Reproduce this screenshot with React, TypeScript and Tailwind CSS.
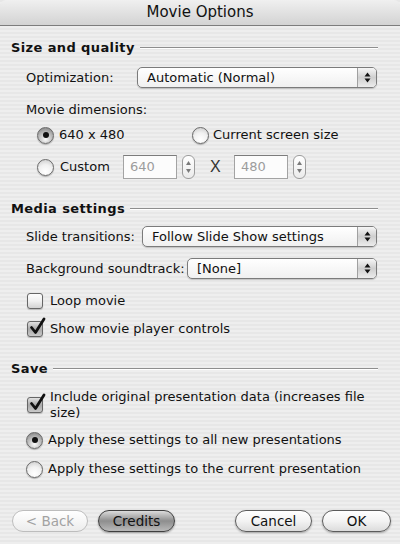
import React from 'react';
import clsx from 'clsx';

function PopUp({ text, className }: { text: string; className?: string }) {
    return (
        <div
            className={clsx(
                "flex h-[21px] items-stretch rounded-[5px] border border-[#7b7b7b] bg-gradient-to-b from-white to-[#f0f0f0] shadow-[0_1px_1px_rgba(0,0,0,0.18)]",
                className
            )}
        >
            <span className="flex-1 pl-[9px] leading-[19px]">{text}</span>
            <span className="flex w-[19px] items-center justify-center rounded-r-[4px] border-l border-[#a0a0a0] bg-gradient-to-b from-[#f6f6f6] via-[#cfcfcf] to-[#ececec]">
                <svg width="7" height="11" viewBox="0 0 7 11">
                    <path d="M0.5 4.5 L3.5 0.5 L6.5 4.5Z M0.5 6.5 L3.5 10.5 L6.5 6.5Z" fill="#111" />
                </svg>
            </span>
        </div>
    );
}

function Radio({ checked }: { checked?: boolean }) {
    return (
        <span
            className={clsx(
                "flex h-[17px] w-[17px] shrink-0 items-center justify-center rounded-full border border-[#6a6a6a] shadow-[0_1px_1px_rgba(0,0,0,0.25)]",
                checked
                    ? "bg-[radial-gradient(circle_at_50%_75%,#fafafa_0%,#b5b5b5_55%,#767676_100%)]"
                    : "bg-[radial-gradient(circle_at_50%_78%,#ffffff_0%,#f1f1f1_50%,#c6c6c6_100%)]"
            )}
        >
            {checked && <span className="h-[6px] w-[6px] rounded-full bg-[#111]" />}
        </span>
    );
}

function Checkbox({ checked, className }: { checked?: boolean; className?: string }) {
    return (
        <span
            className={clsx(
                "relative block h-[16px] w-[16px] shrink-0 rounded-[3px] border border-[#666] shadow-[0_1px_1px_rgba(0,0,0,0.2)]",
                checked
                    ? "bg-gradient-to-b from-[#e2e2e2] via-[#a9a9a9] to-[#c9c9c9]"
                    : "bg-gradient-to-b from-[#fdfdfd] via-[#f0f0f0] to-[#d2d2d2]",
                className
            )}
        >
            {checked && (
                <svg className="absolute -top-[5px] left-[1px]" width="17" height="19" viewBox="0 0 17 19">
                    <path
                        d="M2.5 10.5 L6.5 15.5 L15 2"
                        stroke="#111"
                        strokeWidth="2.8"
                        fill="none"
                        strokeLinecap="round"
                        strokeLinejoin="round"
                    />
                </svg>
            )}
        </span>
    );
}

function Stepper({ className }: { className?: string }) {
    return (
        <span
            className={clsx(
                "flex h-[24px] w-[13px] shrink-0 flex-col items-center justify-center gap-[4px] rounded-[6px] border border-[#9c9c9c] bg-gradient-to-b from-white to-[#ebebeb]",
                className
            )}
        >
            <svg width="5" height="4" viewBox="0 0 5 4">
                <path d="M0 4 L2.5 0 L5 4Z" fill="#7a7a7a" />
            </svg>
            <svg width="5" height="4" viewBox="0 0 5 4">
                <path d="M0 0 L2.5 4 L5 0Z" fill="#7a7a7a" />
            </svg>
        </span>
    );
}

function Field({ value, className }: { value: string; className?: string }) {
    return (
        <div
            className={clsx(
                "h-[24px] w-[54px] shrink-0 border border-[#a3a3a3] border-t-[#7c7c7c] bg-[#fcfcfc] pl-[6px] leading-[22px] text-[#9c9c9c]",
                className
            )}
        >
            {value}
        </div>
    );
}

function AquaButton({ label, kind = 'normal', className }: { label: string; kind?: 'normal' | 'dark' | 'disabled'; className?: string }) {
    return (
        <button
            className={clsx(
                "h-[22px] rounded-full border text-[13.5px] leading-[20px]",
                kind === 'normal' && "border-[#5c5c5c] bg-gradient-to-b from-white via-[#f3f3f3] to-[#dcdcdc] text-[#111] shadow-[0_1px_2px_rgba(0,0,0,0.3)]",
                kind === 'dark' && "border-[#3f3f3f] bg-gradient-to-b from-[#dcdcdc] via-[#8e8e8e] to-[#b9b9b9] text-[#111] shadow-[0_1px_2px_rgba(0,0,0,0.35)]",
                kind === 'disabled' && "border-[#bdbdbd] bg-gradient-to-b from-white via-[#f6f6f6] to-[#ececec] text-[#a2a2a2]",
                className
            )}
        >
            {label}
        </button>
    );
}

function SectionHeader({ title, className }: { title: string; className?: string }) {
    return (
        <div className={clsx("ml-[11px] mr-[22px] flex h-4 items-center", className)}>
            <span className="text-[13px] font-bold tracking-[0.03em]">{title}</span>
            <div className="ml-[5px] h-[2px] flex-1 border-b border-white bg-[#8e8e8e]" />
        </div>
    );
}

export default function App() {
    return (
        <div className="h-[544px] w-[400px] overflow-hidden bg-[repeating-linear-gradient(0deg,#eeeeee_0px,#eeeeee_2px,#e7e7e7_2px,#e7e7e7_4px)] font-['DejaVu_Sans',sans-serif] text-[13px] text-[#111]">
            {/* title bar */}
            <div className="flex h-[26px] items-center justify-center rounded-t-[6px] border-b border-[#7d7d7d] bg-gradient-to-b from-[#f0f0f0] to-[#d3d3d3] text-[15px]">
                Movie Options
            </div>

            {/* Size and quality */}
            <SectionHeader title="Size and quality" className="mt-[14px]" />
            <div className="ml-[26px] mr-[23px] mt-[11px] flex items-center">
                <span className="w-[111px] shrink-0">Optimization:</span>
                <PopUp className="flex-1" text="Automatic (Normal)" />
            </div>
            <div className="ml-[26px] mt-[14px] leading-4">Movie dimensions:</div>
            <div className="ml-[37px] mt-[8px] flex h-[18px] items-center">
                <div className="flex w-[155px] items-center">
                    <Radio checked />
                    <span className="ml-[5px]">640 x 480</span>
                </div>
                <Radio />
                <span className="ml-[4px]">Current screen size</span>
            </div>
            <div className="ml-[37px] mt-[11px] flex h-[24px] items-center">
                <div className="flex w-[86px] items-center">
                    <Radio />
                    <span className="ml-[6px]">Custom</span>
                </div>
                <Field value="640" />
                <Stepper className="ml-[5px]" />
                <span className="ml-[15px] w-[12px] font-['Liberation_Sans',sans-serif] text-[16px] text-[#333]">X</span>
                <Field value="480" className="ml-[12px]" />
                <Stepper className="ml-[5px]" />
            </div>

            {/* Media settings */}
            <SectionHeader title="Media settings" className="mt-[22px]" />
            <div className="ml-[26px] mr-[23px] mt-[9px] flex items-center">
                <span className="w-[116px] shrink-0">Slide transitions:</span>
                <PopUp className="flex-1" text="Follow Slide Show settings" />
            </div>
            <div className="ml-[26px] mr-[23px] mt-[11px] flex items-center">
                <span className="w-[161px] shrink-0">Background soundtrack:</span>
                <PopUp className="flex-1" text="[None]" />
            </div>
            <div className="ml-[27px] mt-[13px] flex h-[18px] items-center">
                <Checkbox />
                <span className="ml-[7px]">Loop movie</span>
            </div>
            <div className="ml-[27px] mt-[10px] flex h-[18px] items-center">
                <Checkbox checked />
                <span className="ml-[7px]">Show movie player controls</span>
            </div>

            {/* Save */}
            <SectionHeader title="Save" className="mt-[23px]" />
            <div className="ml-[27px] mr-[30px] mt-[12px] flex items-start">
                <Checkbox checked className="mt-[8px]" />
                <span className="ml-[7px] leading-[16px]">Include original presentation data (increases file size)</span>
            </div>
            <div className="ml-[26px] mt-[10px] flex h-[18px] items-center">
                <Radio checked />
                <span className="ml-[5px]">Apply these settings to all new presentations</span>
            </div>
            <div className="ml-[26px] mt-[11px] flex h-[18px] items-center">
                <Radio />
                <span className="ml-[5px]">Apply these settings to the current presentation</span>
            </div>

            {/* buttons */}
            <div className="ml-[12px] mr-[9px] mt-[32px] flex items-center">
                <AquaButton label="< Back" kind="disabled" className="w-[76px]" />
                <AquaButton label="Credits" kind="dark" className="ml-[10px] w-[77px]" />
                <div className="flex-1" />
                <AquaButton label="Cancel" className="w-[77px]" />
                <AquaButton label="OK" className="ml-[10px] w-[69px]" />
            </div>
        </div>
    );
}
